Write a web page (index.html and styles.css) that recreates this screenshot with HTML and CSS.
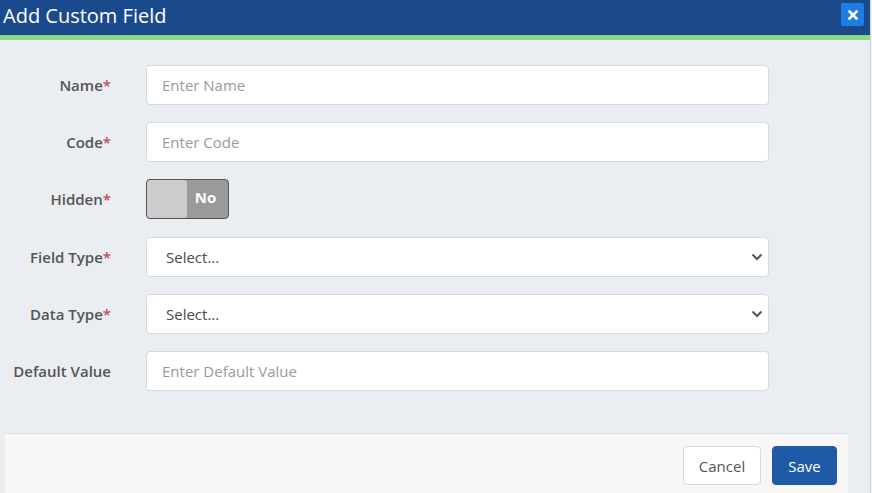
FILE: index.html
```html
<!DOCTYPE html>
<html>
<head>
<meta charset="utf-8">
<link rel="stylesheet" href="styles.css">
</head>
<body>
<div class="modal">
  <div class="header">
    <div class="title">Add Custom Field</div>
    <button class="close" type="button">
      <svg width="12" height="12" viewBox="0 0 12 12"><path d="M2.5 2.5 L9.5 9.5 M9.5 2.5 L2.5 9.5" stroke="#fff" stroke-width="2.6" stroke-linecap="square"/></svg>
    </button>
  </div>
  <div class="body">
    <form class="form">
      <label class="label">Name<span class="req">*</span></label>
      <input class="control" placeholder="Enter Name">
      <label class="label">Code<span class="req">*</span></label>
      <input class="control" placeholder="Enter Code">
      <label class="label">Hidden<span class="req">*</span></label>
      <div class="toggle-row">
        <div class="toggle"><span class="knob"></span><span class="state">No</span></div>
      </div>
      <label class="label">Field Type<span class="req">*</span></label>
      <div class="select"><span>Select...</span>
        <svg width="12" height="8" viewBox="0 0 12 8"><path d="M1.5 1.5 L6 6 L10.5 1.5" fill="none" stroke="#555" stroke-width="2"/></svg>
      </div>
      <label class="label">Data Type<span class="req">*</span></label>
      <div class="select"><span>Select...</span>
        <svg width="12" height="8" viewBox="0 0 12 8"><path d="M1.5 1.5 L6 6 L10.5 1.5" fill="none" stroke="#555" stroke-width="2"/></svg>
      </div>
      <label class="label">Default Value</label>
      <input class="control" placeholder="Enter Default Value">
    </form>
    <div class="footer">
      <button class="btn btn-cancel" type="button">Cancel</button>
      <button class="btn btn-save" type="button">Save</button>
    </div>
  </div>
</div>
</body>
</html>
```

FILE: styles.css
```css
* { box-sizing: border-box; }
html, body { margin: 0; padding: 0; }
body {
  width: 872px;
  height: 493px;
  overflow: hidden;
  background: #f4f5f7;
  font-family: "Open Sans", "Noto Sans", sans-serif;
}
.modal {
  width: 871px;
  height: 493px;
  border-right: 1px solid #cfd3d9;
  background: #eaedf2;
  display: flex;
  flex-direction: column;
}
.header {
  height: 40px;
  background: #1b4a8c;
  border-bottom: 5px solid #84d984;
  display: flex;
  align-items: center;
  justify-content: space-between;
  padding: 0 6px 0 3px;
  flex: none;
}
.title {
  color: #fff;
  font-size: 20px;
  line-height: 26px;
  margin-top: -3px;
}
.close {
  width: 23px;
  height: 23px;
  border: 0;
  border-radius: 2px;
  background: #1e7ce3;
  display: flex;
  align-items: center;
  justify-content: center;
  padding: 0;
  margin-top: -6px;
}
.body {
  flex: 1;
  display: flex;
  flex-direction: column;
}
.form {
  display: grid;
  grid-template-columns: 111px 623px;
  column-gap: 35px;
  row-gap: 17.2px;
  grid-auto-rows: 40px;
  padding-top: 25px;
  margin: 0;
  height: 393px;
  align-content: start;
}
.label {
  text-align: right;
  align-self: center;
  font-size: 15px;
  font-weight: 600;
  color: #555;
}
.req { color: #c0504d; }
.control {
  width: 623px;
  height: 40px;
  border: 1px solid #d6d9de;
  border-radius: 4px;
  background: #fff;
  padding: 0 15px;
  font-family: inherit;
  font-size: 15px;
  color: #444;
  outline: none;
}
.control::placeholder { color: #9a9a9a; }
.toggle-row { display: flex; align-items: center; }
.toggle {
  width: 83px;
  height: 40px;
  border: 1px solid #555;
  border-radius: 4px;
  background: #9a9a9a;
  display: flex;
  overflow: hidden;
}
.knob {
  width: 40px;
  height: 100%;
  background: #cccccc;
  border-radius: 3px;
}
.state {
  flex: 1;
  display: flex;
  align-items: center;
  justify-content: center;
  color: #fff;
  font-weight: 700;
  font-size: 15px;
  padding-right: 4px;
  padding-bottom: 4px;
}
.select {
  width: 623px;
  height: 40px;
  border: 1px solid #d6d9de;
  border-radius: 4px;
  background: #fff;
  display: flex;
  align-items: center;
  justify-content: space-between;
  padding: 0 5px 0 19px;
  font-size: 15px;
  color: #4a4a4a;
}
.footer {
  margin-left: 5px;
  width: 843px;
  flex: 1;
  background: #f7f7f7;
  border-top: 1px solid #dcdfe3;
  display: flex;
  justify-content: flex-end;
  align-items: flex-start;
  gap: 11px;
  padding: 12px 11px 0 0;
}
.btn {
  height: 39px;
  border-radius: 4px;
  font-family: inherit;
  font-size: 15px;
  padding: 0;
}
.btn-cancel {
  width: 78px;
  background: #fff;
  border: 1px solid #d6d9de;
  color: #555;
}
.btn-save {
  width: 65px;
  background: #1f5aa6;
  border: 1px solid #1f5aa6;
  color: #fff;
}
```
